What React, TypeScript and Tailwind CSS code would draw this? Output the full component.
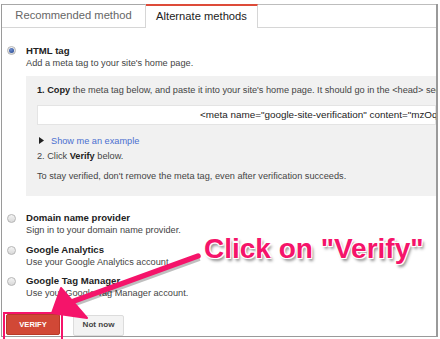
import React from "react";

function Radio({ checked }: { checked?: boolean }) {
  return (
    <span className="flex h-[9px] w-[9px] items-center justify-center rounded-full border border-[#b5b5b5] bg-[linear-gradient(#f4f4f4,#d9d9d9)]">
      {checked && <span className="h-[5px] w-[5px] rounded-full bg-[radial-gradient(circle_at_40%_35%,#6f8fd0,#1d3f8a)]" />}
    </span>
  );
}

function Option({
  title,
  sub,
  checked,
  className,
}: {
  title: string;
  sub: string;
  checked?: boolean;
  className?: string;
}) {
  return (
    <div className={"flex " + (className ?? "")}>
      <div className="flex h-[12px] w-[24px] items-center pl-[5px]">
        <Radio checked={checked} />
      </div>
      <div className="flex flex-col">
        <div className="h-[12px] text-[9.6px] font-bold leading-[12px] text-[#222]">{title}</div>
        <div className="h-[12px] text-[9.2px] leading-[12px] text-[#444]">{sub}</div>
      </div>
    </div>
  );
}

export default function App() {
  return (
    <div className="relative h-[339px] w-[440px] overflow-hidden bg-white font-['Liberation_Sans',Arial,sans-serif]">
      <div className="ml-[1px] mt-[4px] flex h-[333px] w-[437px] flex-col border-b border-l border-r-2 border-[#9a9a9a] border-b-[#9a9a9a]">
        {/* Tabs */}
        <div className="flex h-[24px]">
          <div className="flex w-[144px] items-center justify-center border-b border-r border-t border-b-[#d6d6d6] border-r-[#d6d6d6] border-t-[#a8a8a8] bg-white text-[11.2px] text-[#666]">
            Recommended method
          </div>
          <div className="flex w-[112px] items-center justify-center border-r border-t-2 border-r-[#d6d6d6] border-t-[#dd4b39] pb-[1px] text-[11.2px] text-[#222]">
            Alternate methods
          </div>
          <div className="flex-1 border-b border-t border-b-[#d6d6d6] border-t-[#bdbdbd]" />
        </div>

        {/* HTML tag */}
        <Option className="mt-[17px]" checked title="HTML tag" sub="Add a meta tag to your site's home page." />
        <div className="ml-[24px] mt-[7px] flex h-[122px] flex-col overflow-hidden bg-[#f1f1f1] pl-[11px] pt-[8px] text-[9.2px] leading-[12px] text-[#444]">
          <div className="whitespace-nowrap">
            <b className="text-[#222]">1. Copy</b> the meta tag below, and paste it into your site's home page. It should go in the &lt;head&gt; section, before the first &lt;body&gt; section.
          </div>
          <div className="mt-[9px] flex h-[20px] items-center whitespace-nowrap border border-[#e4e4e4] bg-white pl-[162px] text-[9.9px] text-[#222]">
            &lt;meta name="google-site-verification" content="mzOq3v7R2xPq" /&gt;
          </div>
          <div className="mt-[10px] flex items-center pl-[2px]">
            <svg width="5" height="7" viewBox="0 0 5 7" className="mr-[7px]">
              <path d="M0 0 L5 3.5 L0 7 Z" fill="#222" />
            </svg>
            <span className="text-[#4a6fd0]">Show me an example</span>
          </div>
          <div className="mt-[3px]">
            2. Click <b className="text-[#222]">Verify</b> below.
          </div>
          <div className="mt-[8px]">To stay verified, don't remove the meta tag, even after verification succeeds.</div>
        </div>

        <Option className="mt-[16px]" title="Domain name provider" sub="Sign in to your domain name provider." />
        <Option className="mt-[8px]" title="Google Analytics" sub="Use your Google Analytics account." />
        <Option className="mt-[7px]" title="Google Tag Manager" sub="Use your Google Tag Manager account." />

        <div className="ml-[4px] mt-[15px] flex gap-[13px]">
          <div className="flex h-[21px] w-[54px] items-center justify-center rounded-[2px] border border-[#b93a28] bg-[#d14836] text-[7.6px] font-bold text-white">
            VERIFY
          </div>
          <div className="mt-[1px] flex h-[21px] w-[51px] items-center justify-center rounded-[2px] border border-[#dcdcdc] bg-[#f3f3f3] text-[8.1px] font-bold text-[#444]">
            Not now
          </div>
        </div>
      </div>

      {/* Annotation overlay */}
      <div className="absolute left-[3px] top-[312px] h-[30px] w-[60px] border-2 border-[#f5146a]" />
      <svg className="absolute left-0 top-0" width="440" height="339" viewBox="0 0 440 339">
        <line x1="198" y1="256" x2="74" y2="301" stroke="rgba(0,0,0,0.25)" strokeWidth="6" transform="translate(1.5,2)" />
        <line x1="198" y1="256" x2="74" y2="301" stroke="#f5146a" strokeWidth="5.5" strokeLinecap="round" />
        <path d="M52 313 L61 288 L87 318 Z" fill="#f5146a" stroke="#f5146a" strokeWidth="2" strokeLinejoin="round" />
      </svg>
      <div className="absolute left-[204px] top-[235px] whitespace-nowrap text-[28px] font-bold leading-[28px] text-[#f5146a] [text-shadow:-1px_-1px_0_#fff,1px_-1px_0_#fff,-1px_1px_0_#fff,1px_1px_0_#fff,2px_3px_3px_rgba(0,0,0,0.45)]">
        Click on "Verify"
      </div>
    </div>
  );
}
